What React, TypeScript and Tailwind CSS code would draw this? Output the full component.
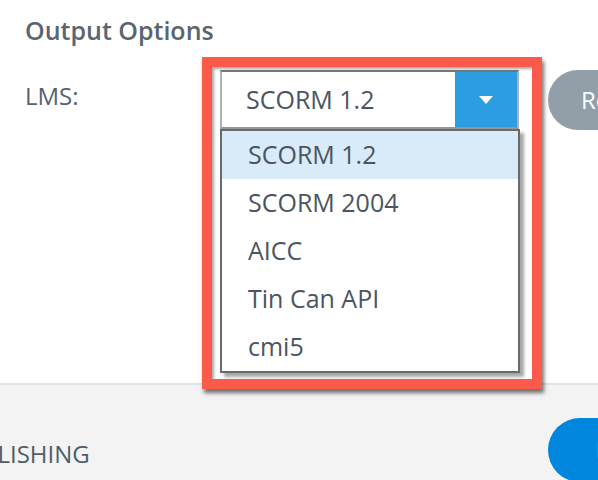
import React from 'react'

const lmsOptions = ['SCORM 1.2', 'SCORM 2004', 'AICC', 'Tin Can API', 'cmi5']

export default function App() {
  const selected = 'SCORM 1.2'

  return (
    <div className="relative h-[480px] w-[598px] overflow-hidden bg-white font-['Open_Sans','Noto_Sans',sans-serif] text-[#4b5560]">
      <section className="h-[385px] border-b-2 border-[#dfe4e8] px-[25px] pt-[14px]">
        <h2 className="text-[25px] font-semibold leading-[32px] text-[#5a6570]">Output Options</h2>

        <div className="mt-[24px] flex items-start">
          <span className="w-[195px] shrink-0 pt-[11px] text-[24px] leading-[30px] text-[#56626d]">LMS:</span>

          <div className="relative w-[299px] shrink-0">
            <div className="flex h-[59px] border-2 border-[#a9b3ba] border-t-[#75797c] border-b-[#8e979e] bg-white">
              <span className="flex-1 pl-[24px] text-[25px] leading-[55px] text-[#4b5560]">{selected}</span>
              <span className="flex w-[62px] items-center justify-center bg-[#2d9de1]">
                <svg width="14" height="8" viewBox="0 0 14 8">
                  <path d="M0 0h14L7 8z" fill="#fff" />
                </svg>
              </span>
            </div>

            <ul className="absolute left-0 top-[59px] z-10 w-[300px] border-2 border-[#6a6a6a] bg-white shadow-[4px_4px_3px_rgba(0,0,0,0.35)]">
              {lmsOptions.map((opt) => (
                <li
                  key={opt}
                  className={`h-[48px] pl-[26px] text-[25px] leading-[46px] ${
                    opt === selected ? 'bg-[#d9eaf8]' : 'bg-white'
                  }`}
                >
                  {opt}
                </li>
              ))}
            </ul>
          </div>

          <button className="ml-[29px] h-[60px] shrink-0 rounded-full bg-[#939fa8] pl-[33px] pr-[30px] text-[24px] text-white">
            Reset
          </button>
        </div>
      </section>

      <section className="flex h-[95px] items-start justify-between bg-[#f3f3f3]">
        <span className="ml-[-50px] mt-[54px] shrink-0 text-[24px] leading-[30px] text-[#4f5d68]">PUBLISHING</span>
        <button className="mt-[33px] h-[64px] w-[120px] shrink-0 translate-x-[70px] rounded-full bg-[#0086dc] pl-[48px] text-left text-[22px] font-semibold text-white">
          Publish
        </button>
      </section>

      <div className="pointer-events-none absolute left-[202px] top-[57px] h-[332px] w-[340px] border-[10px] border-[#fe5a4b] shadow-[2px_4px_4px_rgba(0,0,0,0.55),inset_2px_2px_3px_rgba(0,0,0,0.35)]" />
    </div>
  )
}
